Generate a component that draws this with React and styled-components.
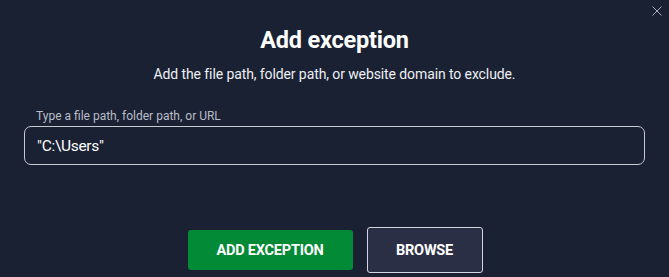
import React from 'react';
import styled, { createGlobalStyle } from 'styled-components';

const GlobalStyle = createGlobalStyle`
  html, body {
    margin: 0;
    padding: 0;
    background: #1a2133;
  }
  body {
    font-family: Roboto, "Liberation Sans", sans-serif;
  }
`;

const Dialog = styled.div`
  position: relative;
  width: 669px;
  height: 277px;
  box-sizing: border-box;
  background: #1a2133;
  padding: 26px 24px 0 24px;
  display: flex;
  flex-direction: column;
  color: #fff;
`;

const CloseButton = styled.button`
  position: absolute;
  top: 5px;
  right: 6px;
  width: 12px;
  height: 12px;
  padding: 0;
  border: 0;
  background: none;
  cursor: pointer;
  svg {
    display: block;
  }
`;

const Title = styled.h2`
  margin: 0;
  text-align: center;
  font-size: 23.5px;
  line-height: 28px;
  font-weight: 700;
  letter-spacing: -0.2px;
`;

const Subtitle = styled.p`
  margin: 12px 0 0;
  text-align: center;
  font-size: 14px;
  line-height: 17px;
  letter-spacing: -0.1px;
  color: #eef0f4;
`;

const Label = styled.label`
  margin: 26px 0 0 12px;
  font-size: 12px;
  line-height: 14px;
  color: #b9bdc7;
`;

const PathInput = styled.input`
  margin-top: 3px;
  height: 39px;
  box-sizing: border-box;
  border: 1px solid #c5c9d2;
  border-radius: 7px;
  background: transparent;
  color: #fff;
  padding: 0 12px;
  font-family: inherit;
  font-size: 15.5px;
  letter-spacing: -0.3px;
  outline: none;
`;

const Actions = styled.div`
  margin-top: 62px;
  display: flex;
  justify-content: center;
  align-items: center;
  gap: 14px;
  padding-left: 1px;
`;

const Button = styled.button`
  box-sizing: border-box;
  height: ${(p) => (p.primary ? '40px' : '46px')};
  width: ${(p) => (p.primary ? '165px' : '116px')};
  border-radius: 3px;
  border: ${(p) => (p.primary ? '0' : '1px solid #d3d6de')};
  background: ${(p) => (p.primary ? '#028a37' : '#2a2f45')};
  color: #fff;
  font-family: inherit;
  font-size: 14.5px;
  font-weight: 700;
  letter-spacing: -0.2px;
  cursor: pointer;
`;

export default function App() {
  return (
    <>
      <GlobalStyle />
      <Dialog>
        <CloseButton aria-label="Close">
          <svg width="12" height="12" viewBox="0 0 12 12">
            <path d="M1.5 1.5 L10.5 10.5 M10.5 1.5 L1.5 10.5" stroke="#a7acb8" strokeWidth="1" />
          </svg>
        </CloseButton>
        <Title>Add exception</Title>
        <Subtitle>Add the file path, folder path, or website domain to exclude.</Subtitle>
        <Label>Type a file path, folder path, or URL</Label>
        <PathInput defaultValue={'"C:\\Users"'} />
        <Actions>
          <Button primary>ADD EXCEPTION</Button>
          <Button>BROWSE</Button>
        </Actions>
      </Dialog>
    </>
  );
}
